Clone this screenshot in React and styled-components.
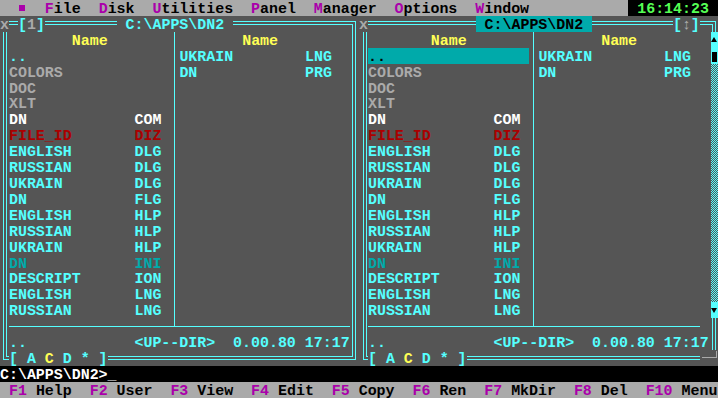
import styled, { createGlobalStyle } from "styled-components";

// one text-mode cell of the 80x25 screen
const CW = 8.975;
const RH = 15.92;

const GlobalStyle = createGlobalStyle`
  html, body {
    margin: 0;
    padding: 0;
    background: #000000;
    overflow: hidden;
  }
`;

// taller line box than the row so the glyphs sit 2px lower, like the VGA font
const Screen = styled.div`
  width: ${80 * CW}px;
  height: ${25 * RH}px;
  display: flex;
  flex-direction: column;
  font-family: "Liberation Mono", "DejaVu Sans Mono", monospace;
  font-size: 14.956px;
  font-weight: bold;
  line-height: ${RH + 4}px;
  white-space: pre;
`;

const MenuBar = styled.div`
  height: ${RH}px;
  display: flex;
  gap: ${2 * CW}px;
  padding-left: ${2 * CW}px;
  background: #aaaaaa;
  color: #000000;
`;

const SysIcon = styled.span`
  width: ${CW}px;
  display: flex;
  align-items: center;
  justify-content: center;
  &::before {
    content: "";
    width: 6px;
    height: 6px;
    background: #aa00aa;
  }
`;

const Hot = styled.span`
  color: #aa00aa;
`;

const Clock = styled.div`
  margin-left: auto;
  width: ${10 * CW}px;
  padding-left: ${CW}px;
  box-sizing: border-box;
  background: #000000;
  color: #55ff55;
`;

const Panels = styled.div`
  display: grid;
  grid-template-columns: repeat(2, ${40 * CW}px);
  height: ${22 * RH}px;
`;

const Panel = styled.section`
  display: grid;
  grid-template-columns: repeat(40, ${CW}px);
  grid-template-rows: repeat(22, ${RH}px);
  background: #555555;
  color: #55ffff;
`;

const Frame = styled.div`
  grid-column: 1 / -1;
  grid-row: 1 / -1;
  margin: ${(p) => p.$margin};
  border: 4px double #55ffff;
`;

const CloseBox = styled.div`
  grid-column: 1;
  grid-row: 1;
  background: #555555;
  color: #aaaaaa;
`;

const Badge = styled.div`
  grid-column: ${(p) => p.$col} / span 3;
  grid-row: 1;
  background: #555555;
  color: #55ffff;
  span {
    color: #aaaaaa;
  }
`;

const Title = styled.div`
  grid-column: 14 / span 13;
  grid-row: 1;
  background: ${(p) => (p.$active ? "#00aaaa" : "#555555")};
  color: ${(p) => (p.$active ? "#000000" : "#55ffff")};
`;

const FileColumn = styled.div`
  grid-column: ${(p) => p.$col} / span ${(p) => p.$span};
  grid-row: 2 / span 18;
  display: flex;
  flex-direction: column;
`;

const ColumnHead = styled.div`
  height: ${RH}px;
  padding-left: ${7 * CW}px;
  color: #ffff55;
`;

const FileRow = styled.div`
  height: ${RH}px;
  display: flex;
  color: ${(p) => (p.$cursor ? "#000000" : p.$color)};
  background: ${(p) => (p.$cursor ? "#00aaaa" : "transparent")};
`;

const FileName = styled.span`
  width: ${14 * CW}px;
  flex: none;
`;

const Divider = styled.div`
  grid-column: 20;
  grid-row: 2 / 21;
  width: 0;
  margin: 0 0 7px 4px;
  border-left: 1px solid #55ffff;
`;

const Separator = styled.div`
  grid-column: 2 / span ${(p) => p.$span};
  grid-row: 20;
  align-self: start;
  margin-top: 8px;
  border-top: 1px solid #55ffff;
`;

const InfoLine = styled.div`
  grid-column: 2 / span 38;
  grid-row: 21;
`;

const DriveBar = styled.div`
  grid-column: 2 / span 11;
  grid-row: 22;
  background: #555555;
  span {
    color: #ffff55;
  }
`;

const ScrollBar = styled.div`
  grid-column: 40;
  grid-row: 2 / span 18;
  margin-left: 2px;
  display: flex;
  flex-direction: column;
`;

const ScrollButton = styled.div`
  height: ${RH}px;
  flex: none;
  background: #55ffff;
  display: flex;
  justify-content: center;
  align-items: ${(p) => p.$align};
  padding: ${(p) => p.$pad};
  box-sizing: border-box;
`;

const Arrow = styled.span`
  width: 0;
  height: 0;
  border-left: 3px solid transparent;
  border-right: 3px solid transparent;
  ${(p) => (p.$down ? "border-top" : "border-bottom")}: 5px solid #000000;
`;

const Thumb = styled.span`
  width: 5px;
  height: 10px;
  background: #000000;
`;

const Track = styled.div`
  flex: 1;
  background-image: repeating-conic-gradient(#55ffff 0 25%, #555555 0 50%);
  background-size: 2px 2px;
`;

const Grip = styled.div`
  grid-column: 39 / span 2;
  grid-row: 22;
  background: #555555;
  padding: 0 1px 0 2px;
  &::after {
    content: "";
    display: block;
    margin-top: 1px;
    height: 6px;
    border-bottom: 1px solid #aaaaaa;
    border-right: 1px solid #aaaaaa;
  }
`;

const CommandLine = styled.div`
  height: ${RH}px;
  background: #000000;
  color: #ffffff;
`;

const KeyBar = styled.div`
  height: ${RH}px;
  display: flex;
  gap: ${2 * CW}px;
  padding-left: ${CW}px;
  background: #aaaaaa;
  color: #000000;
`;

const menu = ["File", "Disk", "Utilities", "Panel", "Manager", "Options", "Window"];

const keys = [
  ["F1", "Help"],
  ["F2", "User"],
  ["F3", "View"],
  ["F4", "Edit"],
  ["F5", "Copy"],
  ["F6", "Ren"],
  ["F7", "MkDir"],
  ["F8", "Del"],
  ["F10", "Menu"],
];

const CYAN = "#55ffff";

const leftFiles = [
  { name: "..", ext: "", color: CYAN },
  { name: "COLORS", ext: "", color: "#aaaaaa" },
  { name: "DOC", ext: "", color: "#aaaaaa" },
  { name: "XLT", ext: "", color: "#aaaaaa" },
  { name: "DN", ext: "COM", color: "#ffffff" },
  { name: "FILE_ID", ext: "DIZ", color: "#aa0000" },
  { name: "ENGLISH", ext: "DLG", color: CYAN },
  { name: "RUSSIAN", ext: "DLG", color: CYAN },
  { name: "UKRAIN", ext: "DLG", color: CYAN },
  { name: "DN", ext: "FLG", color: CYAN },
  { name: "ENGLISH", ext: "HLP", color: CYAN },
  { name: "RUSSIAN", ext: "HLP", color: CYAN },
  { name: "UKRAIN", ext: "HLP", color: CYAN },
  { name: "DN", ext: "INI", color: "#00aaaa" },
  { name: "DESCRIPT", ext: "ION", color: CYAN },
  { name: "ENGLISH", ext: "LNG", color: CYAN },
  { name: "RUSSIAN", ext: "LNG", color: CYAN },
];

const rightFiles = [
  { name: "UKRAIN", ext: "LNG", color: CYAN },
  { name: "DN", ext: "PRG", color: CYAN },
];

function Column({ col, span, files, cursor }) {
  return (
    <FileColumn $col={col} $span={span}>
      <ColumnHead>Name</ColumnHead>
      {files.map((f, i) => (
        <FileRow key={i} $color={f.color} $cursor={cursor && i === 0}>
          <FileName>{f.name}</FileName>
          {f.ext}
        </FileRow>
      ))}
    </FileColumn>
  );
}

function FilePanel({ active }) {
  return (
    <Panel>
      <Frame $margin={active ? "5px 2px 6px 4px" : "5px 3px 6px 3px"} />
      <CloseBox>x</CloseBox>
      {active ? (
        <Badge $col={36}>
          [<span>↕</span>]
        </Badge>
      ) : (
        <Badge $col={3}>
          [<span>1</span>]
        </Badge>
      )}
      <Title $active={active}> C:\APPS\DN2 </Title>
      <Column col={2} span={18} files={leftFiles} cursor={active} />
      <Divider />
      <Column col={21} span={19} files={rightFiles} />
      <Separator $span={active ? 37 : 38} />
      <InfoLine>{"..            <UP--DIR>  0.00.80 17:17"}</InfoLine>
      <DriveBar>
        [ A <span>C</span> D * ]
      </DriveBar>
      {active && (
        <>
          <ScrollBar>
            <ScrollButton $align="flex-start" $pad="5px 0 0">
              <Arrow />
            </ScrollButton>
            <ScrollButton $align="flex-end" $pad="0 0 2px">
              <Thumb />
            </ScrollButton>
            <Track />
            <ScrollButton $align="flex-start" $pad="6px 0 0">
              <Arrow $down />
            </ScrollButton>
          </ScrollBar>
          <Grip />
        </>
      )}
    </Panel>
  );
}

export default function App() {
  return (
    <>
      <GlobalStyle />
      <Screen>
        <MenuBar>
          <SysIcon />
          {menu.map((m) => (
            <span key={m}>
              <Hot>{m[0]}</Hot>
              {m.slice(1)}
            </span>
          ))}
          <Clock>16:14:23</Clock>
        </MenuBar>
        <Panels>
          <FilePanel />
          <FilePanel active />
        </Panels>
        <CommandLine>C:\APPS\DN2&gt;_</CommandLine>
        <KeyBar>
          {keys.map(([k, label]) => (
            <span key={k}>
              <Hot>{k}</Hot> {label}
            </span>
          ))}
        </KeyBar>
      </Screen>
    </>
  );
}
